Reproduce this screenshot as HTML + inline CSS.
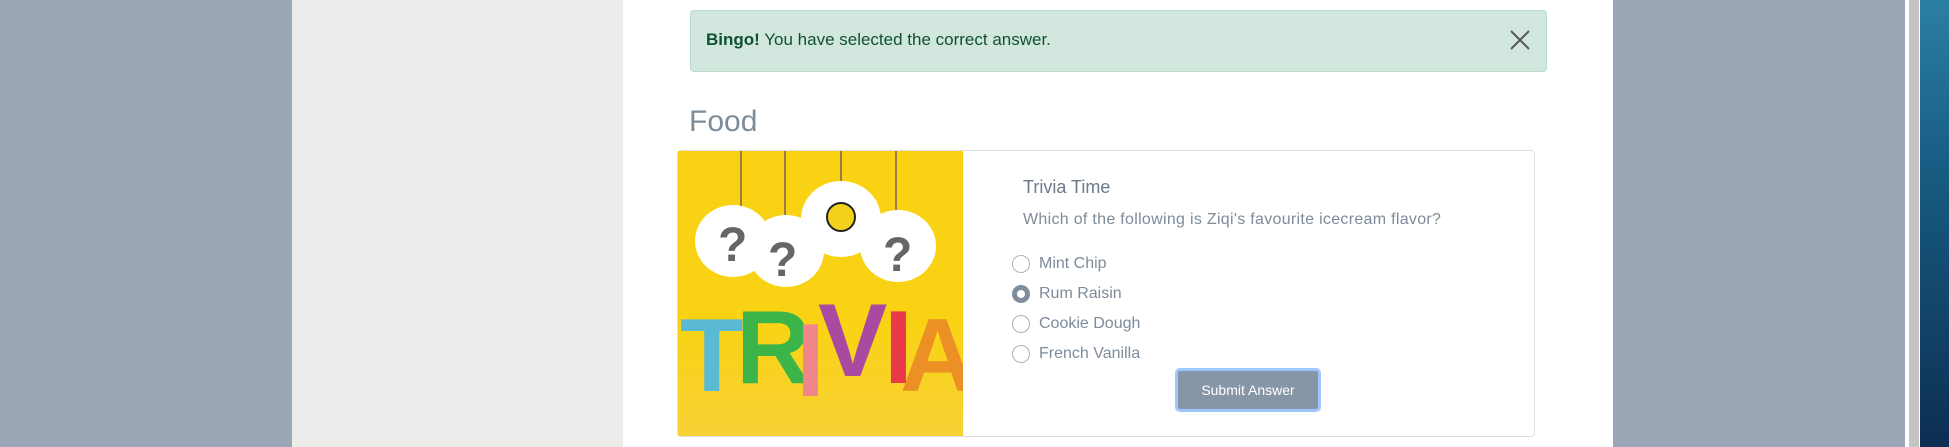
<!DOCTYPE html>
<html><head><meta charset="utf-8"><style>
body{margin:0;width:1949px;height:447px;position:relative;overflow:hidden;background:#9ba7b7;font-family:"Liberation Sans",sans-serif;}
div{position:absolute;box-sizing:border-box}
.r{width:18px;height:18px;border:1px solid #aab2bb;border-radius:50%;left:1012px;background:#fff}
.l{left:1039px;font-size:16px;color:#7d8b9a;line-height:20px}
</style></head><body>
<div style="left:292px;top:0;width:331px;height:447px;background:#ececea"></div>
<div style="left:623px;top:0;width:990px;height:447px;background:#fff"></div>
<div style="left:1905px;top:0;width:4px;height:447px;background:#fff"></div>
<div style="left:1909px;top:0;width:10px;height:447px;background:#c4c4c4"></div>
<div style="left:1919px;top:0;width:1px;height:447px;background:#fff"></div>
<div style="left:1920px;top:0;width:29px;height:447px;background:linear-gradient(#2b7fa3,#175a80 40%,#0c2f52)"></div>
<div style="left:690px;top:10px;width:857px;height:62px;background:#d1e7dd;border:1px solid #badbcc;border-radius:4px"></div>
<div style="left:706px;top:29px;font-size:17px;color:#0f5132;line-height:22px"><b>Bingo!</b> You have selected the correct answer.</div>
<svg style="position:absolute;left:1510px;top:30px" width="20" height="20"><path d="M1 1L19 19M19 1L1 19" stroke="#555" stroke-width="2"/></svg>
<div style="left:689px;top:104px;font-size:30px;color:#7d8b9a;line-height:36px">Food</div>
<div style="left:677px;top:150px;width:858px;height:287px;border:1px solid #dfdfdf;border-radius:4px"></div>
<div style="left:678px;top:151px;width:285px;height:285px;background:linear-gradient(#f9d313 60%,#f7d235);overflow:hidden">
<svg width="288" height="285">
<g stroke="#a07a44" stroke-width="2"><line x1="63" y1="0" x2="63" y2="60"/><line x1="107" y1="0" x2="107" y2="70"/><line x1="163" y1="0" x2="163" y2="45"/><line x1="218" y1="0" x2="218" y2="70"/></g>
<g fill="#fff"><ellipse cx="55" cy="90" rx="38" ry="36"/><ellipse cx="108" cy="100" rx="38" ry="36"/><ellipse cx="220" cy="95" rx="38" ry="36"/><ellipse cx="163" cy="68" rx="40" ry="38"/></g>
<g font-family="Liberation Sans" font-weight="bold" font-size="48" fill="#666"><text x="40" y="110">?</text><text x="90" y="125">?</text><text x="205" y="120">?</text></g>
<circle cx="163" cy="66" r="14" fill="#f4d21b" stroke="#222" stroke-width="2"/>
<g font-family="Liberation Sans" font-weight="bold" font-size="104"><text x="2" y="240" fill="#5bbad3">T</text><text x="58" y="232" fill="#3bb54a">R</text><text x="118" y="245" fill="#f0868a">I</text><text x="140" y="225" fill="#a94aa0">V</text><text x="206" y="232" fill="#e83a48">I</text><text x="222" y="240" fill="#ec8f25">A</text></g>
</svg></div>
<div style="left:1023px;top:176px;font-size:18px;color:#6c7a8a;line-height:22px">Trivia Time</div>
<div style="left:1023px;top:209px;font-size:16px;color:#7d8b9a;line-height:22px;letter-spacing:0.3px">Which of the following is Ziqi's favourite icecream flavor?</div>
<div class="r" style="top:255px"></div><div class="l" style="top:254px">Mint Chip</div>
<div class="r" style="top:285px;border:5px solid #7f8d9c"></div><div class="l" style="top:284px">Rum Raisin</div>
<div class="r" style="top:315px"></div><div class="l" style="top:314px">Cookie Dough</div>
<div class="r" style="top:345px"></div><div class="l" style="top:344px">French Vanilla</div>
<div style="left:1175px;top:368px;width:146px;height:44px;background:#8796a6;border:3px solid #9ec5fe;border-radius:5px;color:#fff;font-size:14px;text-align:center;line-height:38px">Submit Answer</div>
</body></html>
